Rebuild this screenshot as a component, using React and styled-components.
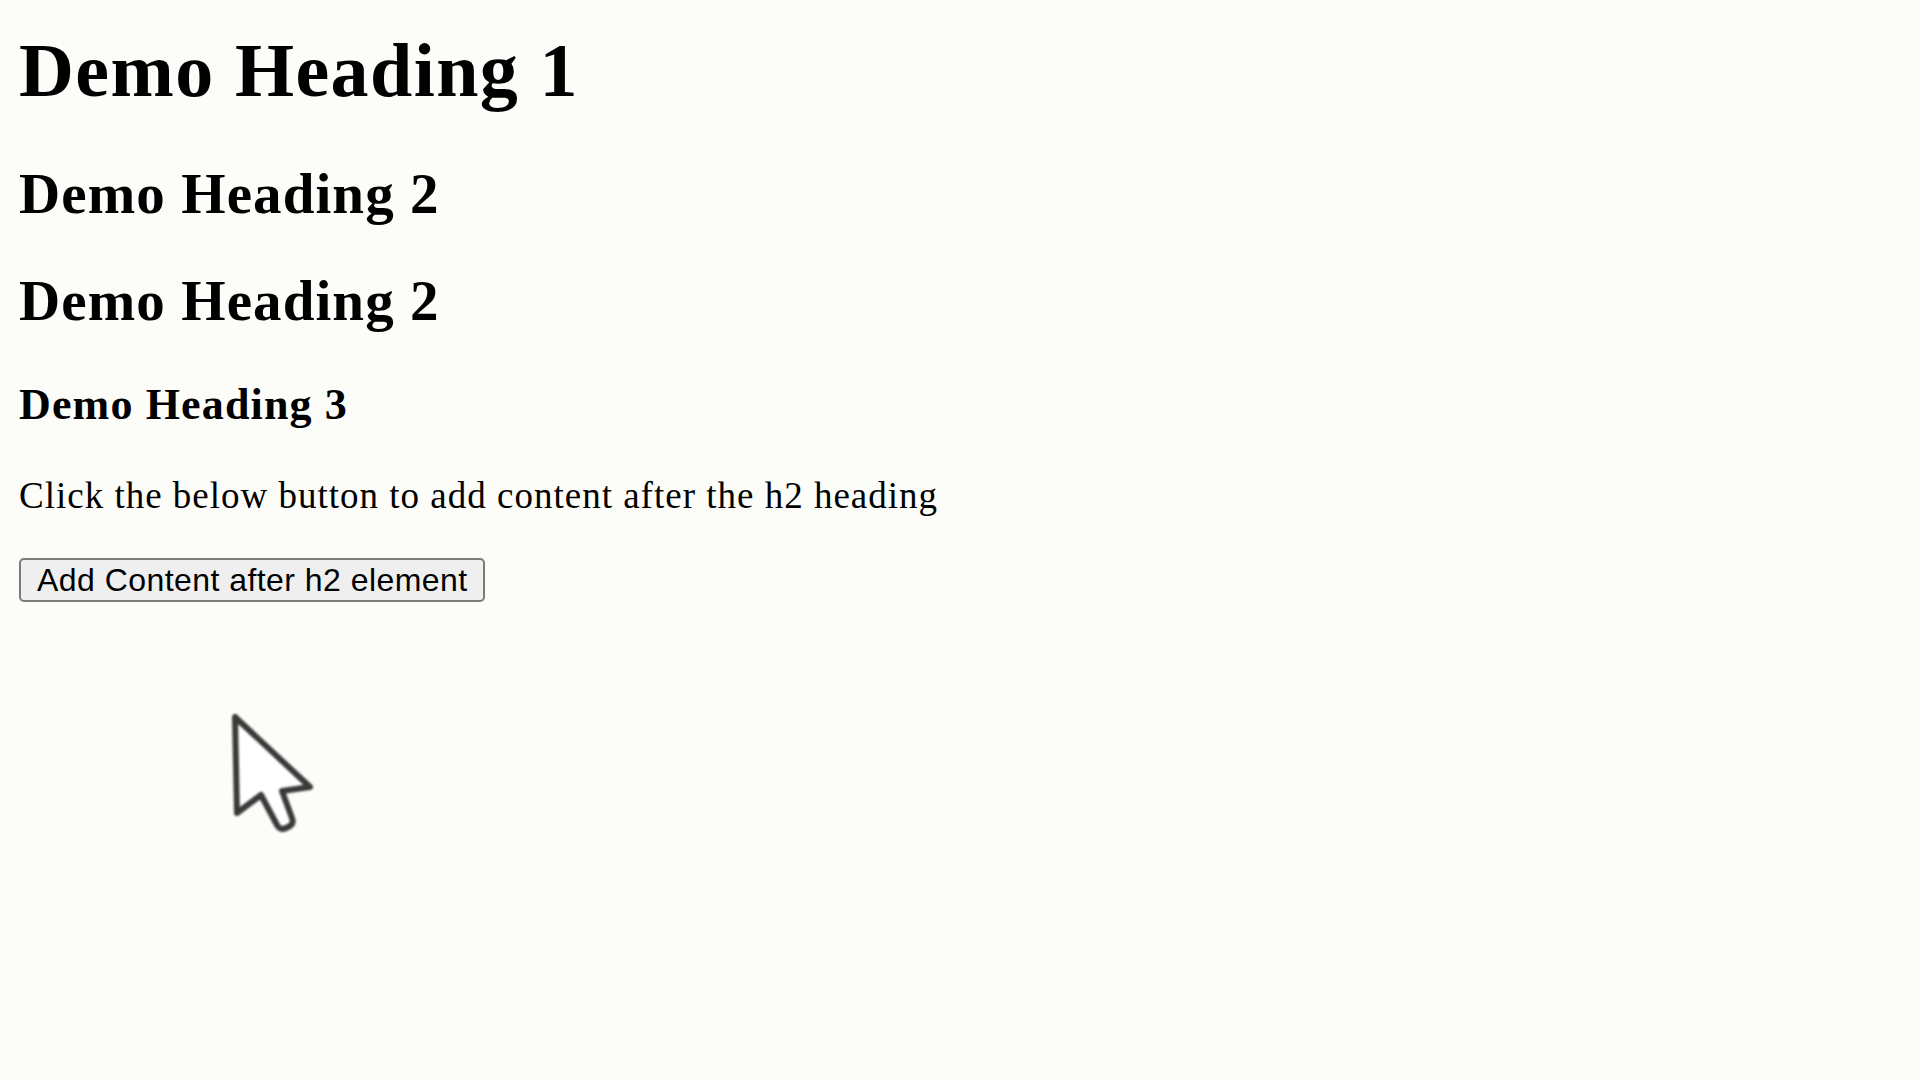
import React from "react";
import styled, { createGlobalStyle } from "styled-components";

const GlobalStyle = createGlobalStyle`
  html, body {
    margin: 0;
    padding: 0;
    background: #fcfcf8;
  }
  #root {
    min-height: 100vh;
  }
`;

const Page = styled.div`
  position: relative;
  display: flex;
  flex-direction: column;
  align-items: flex-start;
  min-height: 1080px;
  padding: 25px 0 0 19px;
  box-sizing: border-box;
  font-family: "Liberation Serif", "Times New Roman", serif;
  color: #000;
  overflow: hidden;
`;

const Heading = styled.div`
  margin: 0 0 ${(p) => p.$after}px;
  font-size: ${(p) => p.$size}px;
  line-height: ${(p) => p.$line}px;
  letter-spacing: ${(p) => p.$track}px;
  font-weight: bold;
  white-space: nowrap;
`;

const Text = styled.p`
  margin: 0 0 40px;
  font-size: 37px;
  line-height: 44px;
  letter-spacing: 1px;
  white-space: nowrap;
`;

const Button = styled.button`
  height: 44px;
  padding: 0 15px 0 16px;
  border: 2px solid #7a7a7a;
  border-radius: 5px;
  background: #efefef;
  color: #000;
  font-family: "Liberation Sans", Arial, sans-serif;
  font-size: 32px;
  line-height: 40px;
  letter-spacing: 0.45px;
  cursor: default;
`;

const Cursor = styled.svg`
  position: absolute;
  left: 229px;
  top: 711px;
  width: 90px;
  height: 130px;
  filter: blur(1.2px);
`;

function Pointer() {
  return (
    <Cursor viewBox="-6 -6 90 130">
      <path
        d="M0 0 L2 96 L26 78 L42 108 Q45 114 51 111 L55 109 Q59 106 57 101 L47 74 L75 70 Z"
        fill="#ffffff"
        stroke="#3a3a3a"
        strokeWidth="6"
        strokeLinejoin="round"
      />
    </Cursor>
  );
}

export default function App() {
  return (
    <>
      <GlobalStyle />
      <Page>
        <Heading as="h1" $size={76} $line={90} $track={1.4} $after={45}>
          Demo Heading 1
        </Heading>
        <Heading as="h2" $size={57} $line={68} $track={1.1} $after={39}>
          Demo Heading 2
        </Heading>
        <Heading as="h2" $size={57} $line={68} $track={1.1} $after={44}>
          Demo Heading 2
        </Heading>
        <Heading as="h3" $size={44} $line={52} $track={1.15} $after={43}>
          Demo Heading 3
        </Heading>
        <Text>Click the below button to add content after the h2 heading</Text>
        <div>
          <Button>Add Content after h2 element</Button>
        </div>
        <Pointer />
      </Page>
    </>
  );
}
